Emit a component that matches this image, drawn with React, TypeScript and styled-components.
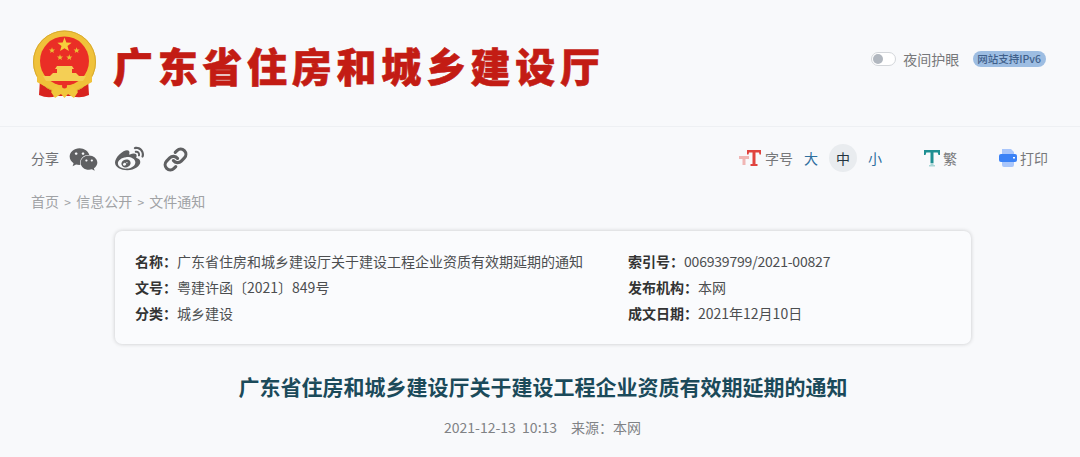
import React from "react";
import styled, { createGlobalStyle } from "styled-components";
import { FaWeibo, FaWeixin } from "react-icons/fa";
import { Link as LinkIcon } from "lucide-react";

const Global = createGlobalStyle`
  html, body { margin: 0; padding: 0; background: #f8f9fb; }
  body { font-family: "Noto Sans CJK SC", "Noto Sans", sans-serif; overflow: hidden; }
`;

const Page = styled.div`
  width: 1080px;
  height: 457px;
  overflow: hidden;
  background: #f8f9fb;
`;

const Header = styled.header`
  height: 127px;
  box-sizing: border-box;
  border-bottom: 1px solid #eef0f3;
  padding: 29px 34px 0 32px;
  display: flex;
  align-items: flex-start;
`;

const Brand = styled.div`
  display: flex;
  align-items: center;
  gap: 13px;
  flex: 1;
`;

const BrandName = styled.div`
  font-size: 40px;
  line-height: 72px;
  height: 72px;
  font-weight: 900;
  letter-spacing: 4.7px;
  color: #c31c14;
  -webkit-text-stroke: 0.6px #c31c14;
  white-space: nowrap;
`;

const HeaderTools = styled.div`
  display: flex;
  align-items: center;
  height: 60px;
`;

const Toggle = styled.div`
  width: 25px;
  height: 14px;
  box-sizing: border-box;
  border: 1px solid #d3d6da;
  border-radius: 7px;
  background: #fff;
  padding: 1px;
  display: flex;
  margin-right: 7px;
`;

const Knob = styled.div`
  width: 10px;
  height: 10px;
  border-radius: 50%;
  background: #b1b7bf;
`;

const NightLabel = styled.span`
  font-size: 14px;
  color: #77787a;
  margin-right: 14px;
`;

const Ipv6 = styled.span`
  font-size: 10.5px;
  line-height: 16px;
  height: 16px;
  padding: 0 5px 0 4px;
  border-radius: 8px;
  background: #9dbde2;
  color: #3f5f8a;
  font-weight: 500;
  white-space: nowrap;
`;

const Toolbar = styled.div`
  display: flex;
  align-items: center;
  height: 34px;
  margin-top: 14px;
  padding: 0 32px 0 31px;
`;

const ShareLabel = styled.span`
  font-size: 14px;
  color: #6f7073;
  margin-right: 10px;
`;

const ShareIcon = styled.span<{ $gap: number }>`
  display: inline-flex;
  color: #5f6062;
  margin-top: 2px;
  margin-right: ${(p) => p.$gap}px;
`;

const Spacer = styled.div`
  flex: 1;
`;

const ToolLabel = styled.span`
  font-size: 14px;
  color: #77787a;
`;

const SizeOption = styled.span<{ $active?: boolean }>`
  width: 28px;
  height: 28px;
  border-radius: 50%;
  display: flex;
  align-items: center;
  justify-content: center;
  font-size: 14px;
  color: ${(p) => (p.$active ? "#23343f" : "#2e6f9e")};
  background: ${(p) => (p.$active ? "#e9ecef" : "transparent")};
`;

const ToolIcon = styled.svg`
  display: block;
  flex: none;
`;

const SizeGroup = styled.div`
  display: flex;
  align-items: center;
  gap: 4px;
  margin-left: 4px;
  margin-right: 35px;
`;

const ToolGroup = styled.div<{ $gap: number }>`
  display: flex;
  align-items: center;
  gap: 3px;
  margin-right: ${(p) => p.$gap}px;
`;

const Crumbs = styled.nav`
  padding-left: 31px;
  margin-top: 16px;
  height: 20px;
  display: flex;
  align-items: center;
  font-size: 14px;
  color: #a0a2a5;
`;

const CrumbSep = styled.span`
  margin: 0 5.25px;
  font-size: 12px;
`;

const Card = styled.section`
  margin: 20px 0 0 115px;
  width: 856px;
  height: 113px;
  box-sizing: border-box;
  background: #fafbfd;
  border-radius: 7px;
  box-shadow: 0 0 4px rgba(0, 0, 0, 0.2);
  padding: 17px 20px 0;
  display: grid;
  grid-template-columns: 493px 1fr;
  grid-auto-rows: 26px;
`;

const Field = styled.div`
  display: flex;
  align-items: center;
  font-size: 14px;
  white-space: nowrap;
`;

const FieldName = styled.span`
  font-weight: 700;
  color: #333;
`;

const FieldValue = styled.span<{ $tight?: boolean }>`
  color: #4c4e50;
  letter-spacing: ${(p) => (p.$tight ? "-0.2px" : "0")};
`;

const Title = styled.h1`
  margin: 27px 0 0;
  padding-left: 6px;
  font-size: 21px;
  line-height: 30px;
  font-weight: 700;
  text-align: center;
  color: #1b4a5a;
`;

const Meta = styled.div`
  margin-top: 16px;
  padding-left: 5px;
  display: flex;
  justify-content: center;
  gap: 14px;
  font-size: 14px;
  line-height: 20px;
  color: #808285;
`;

const Star = ({ x, y, r, fill }: { x: number; y: number; r: number; fill: string }) => {
  const pts = Array.from({ length: 10 }, (_, i) => {
    const a = -Math.PI / 2 + (i * Math.PI) / 5;
    const d = i % 2 ? r * 0.42 : r;
    return `${(x + d * Math.cos(a)).toFixed(2)},${(y + d * Math.sin(a)).toFixed(2)}`;
  }).join(" ");
  return <polygon points={pts} fill={fill} />;
};

const Emblem = () => (
  <svg width="68" height="72" viewBox="0 0 68 72" style={{ flex: "none" }}>
    <path d="M8 50 L7 66 Q16 70 24 67 L40 67 Q48 70 57 66 L56 50 Z" fill="#d8231f" />
    <circle cx="32.500" cy="33" r="31.500" fill="#f0c23a" />
    <circle cx="32.500" cy="33" r="31" fill="none" stroke="#d8aa30" strokeWidth="1" />
    <circle cx="32.500" cy="32" r="24.500" fill="#ea2e26" />
    <Star x={32.5} y={16} r={7.5} fill="#f6cf3c" />
    <Star x={20} y={21.5} r={3.2} fill="#e9c035" />
    <Star x={44.6} y={21.5} r={3.2} fill="#e9c035" />
    <Star x={28} y={28.5} r={3.2} fill="#e9c035" />
    <Star x={37.3} y={28.500} r={3.2} fill="#e9c035" />
    <path d="M25 37h15l2 3h-2v4h-15v-4h-2z" fill="#f4cf55" />
    <path d="M21 44H44l3 3H18z" fill="#f4cf55" />
    <path d="M11 47 H54 L51 52 H14z" fill="#f4cf55" />
    <path d="M5 47 Q32.500 66 60 47 L60 53 Q48 61 32.500 61 Q17 61 5 53z" fill="#f0c23a" />
    <path d="M19 63 L24 57 L29 61 L32.500 57 L36 61 L41 57 L46 63 L42 69 L36 65 L32.500 69 L29 65 L23 69z" fill="#f1c63c" />
    <circle cx="32.500" cy="57" r="2.500" fill="#ea2e26" />
  </svg>
);

export default function App() {
  return (
    <Page>
      <Global />
      <Header>
        <Brand>
          <Emblem />
          <BrandName>广东省住房和城乡建设厅</BrandName>
        </Brand>
        <HeaderTools>
          <Toggle><Knob /></Toggle>
          <NightLabel>夜间护眼</NightLabel>
          <Ipv6>网站支持IPv6</Ipv6>
        </HeaderTools>
      </Header>
      <Toolbar>
        <ShareLabel>分享</ShareLabel>
        <ShareIcon $gap={17}><FaWeixin size={29} /></ShareIcon>
        <ShareIcon $gap={19}><FaWeibo size={29} /></ShareIcon>
        <ShareIcon $gap={0}><LinkIcon size={25} strokeWidth={3} /></ShareIcon>
        <Spacer />
        <ToolGroup $gap={0}>
          <ToolIcon width="23" height="18" viewBox="0 0 23 18">
            <path d="M0 7h10v3H6.500v6h-3v-6H0z" fill="#f0b6b4" />
            <path d="M8 1h14v4.500h-1.500l-.5-2h-3.500V15h2v2h-7v-2h2V3.500H10l-.5 2H8z" fill="#e0443f" />
          </ToolIcon>
          <ToolLabel>字号</ToolLabel>
        </ToolGroup>
        <SizeGroup>
          <SizeOption>大</SizeOption>
          <SizeOption $active>中</SizeOption>
          <SizeOption>小</SizeOption>
        </SizeGroup>
        <ToolGroup $gap={42}>
          <ToolIcon width="16" height="18" viewBox="0 0 16 18">
            <path d="M0 1h16v5h-1.500l-.8-2.500H9.500V14h-3V3.500H2.300L1.500 6H0z" fill="#1f8f92" />
            <path d="M6.500 14h3v2h1.500v1.500H5V16h1.500z" fill="#a9d6d6" />
          </ToolIcon>
          <ToolLabel>繁</ToolLabel>
        </ToolGroup>
        <ToolGroup $gap={0}>
          <ToolIcon width="18" height="18" viewBox="0 0 18 18">
            <path d="M3 0h9l3 3v3H3zM3 12h12v4a2 2 0 0 1-2 2H5a2 2 0 0 1-2-2z" fill="#a9c6fb" />
            <rect x="0" y="5" width="18" height="8" rx="2" fill="#3b82f6" />
            <rect x="14" y="8" width="2" height="1.500" fill="#fff" />
          </ToolIcon>
          <ToolLabel>打印</ToolLabel>
        </ToolGroup>
      </Toolbar>
      <Crumbs>
        首页<CrumbSep>&gt;</CrumbSep>信息公开<CrumbSep>&gt;</CrumbSep>文件通知
      </Crumbs>
      <Card>
        <Field><FieldName>名称：</FieldName><FieldValue>广东省住房和城乡建设厅关于建设工程企业资质有效期延期的通知</FieldValue></Field>
        <Field><FieldName>索引号：</FieldName><FieldValue $tight>006939799/2021-00827</FieldValue></Field>
        <Field><FieldName>文号：</FieldName><FieldValue>粤建许函〔2021〕849号</FieldValue></Field>
        <Field><FieldName>发布机构：</FieldName><FieldValue>本网</FieldValue></Field>
        <Field><FieldName>分类：</FieldName><FieldValue>城乡建设</FieldValue></Field>
        <Field><FieldName>成文日期：</FieldName><FieldValue>2021年12月10日</FieldValue></Field>
      </Card>
      <Title>广东省住房和城乡建设厅关于建设工程企业资质有效期延期的通知</Title>
      <Meta>
        <span>2021-12-13&nbsp;&nbsp;10:13</span>
        <span>来源：本网</span>
      </Meta>
    </Page>
  );
}
